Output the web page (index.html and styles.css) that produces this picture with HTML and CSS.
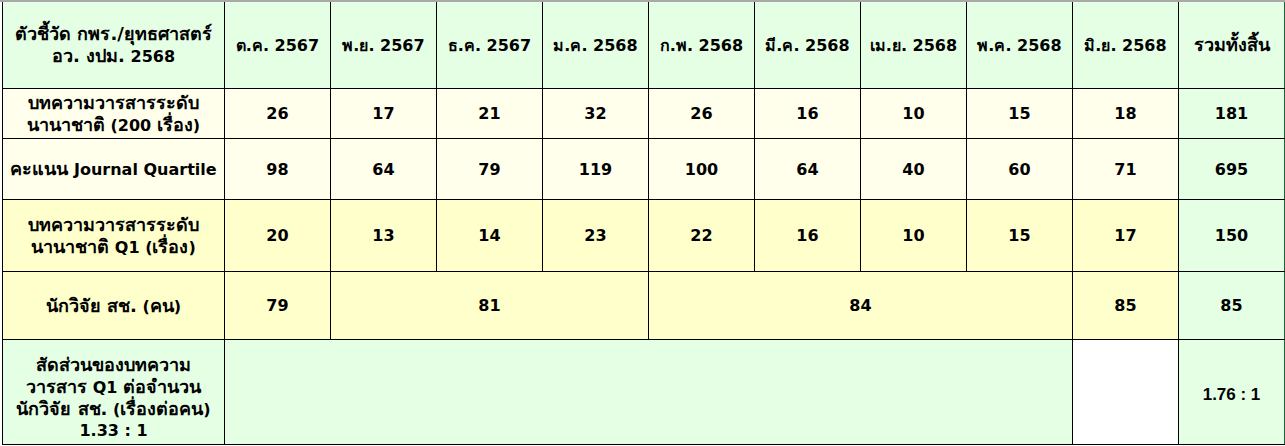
FILE: index.html
```html
<!DOCTYPE html>
<html lang="th">
<head>
<meta charset="utf-8">
<title>ตัวชี้วัด</title>
<link rel="stylesheet" href="styles.css">
</head>
<body>
<div class="frame">
<table class="kpi">
  <colgroup>
    <col class="c-label">
    <col class="c-m"><col class="c-m"><col class="c-m"><col class="c-m"><col class="c-m">
    <col class="c-m"><col class="c-m"><col class="c-m"><col class="c-m"><col class="c-m">
  </colgroup>
  <tr class="r-head">
    <th class="label"><span class="th">ตัวชี้วัด กพร./ยุทธศาสตร์</span><br><span class="th">อว. งปม.</span> 2568</th>
    <th>ต.ค. 2567</th>
    <th>พ.ย. 2567</th>
    <th>ธ.ค. 2567</th>
    <th>ม.ค. 2568</th>
    <th>ก.พ. 2568</th>
    <th>มี.ค. 2568</th>
    <th>เม.ย. 2568</th>
    <th>พ.ค. 2568</th>
    <th>มิ.ย. 2568</th>
    <th><span class="th">รวมทั้งสิ้น</span></th>
  </tr>
  <tr class="r1 cream">
    <td class="label"><span class="th">บทความวารสารระดับ</span><br><span class="th">นานาชาติ</span> (200 <span class="th">เรื่อง</span>)</td>
    <td>26</td><td>17</td><td>21</td><td>32</td><td>26</td><td>16</td><td>10</td><td>15</td><td>18</td>
    <td class="green">181</td>
  </tr>
  <tr class="r2 cream">
    <td class="label"><span class="th">คะแนน</span> Journal Quartile</td>
    <td>98</td><td>64</td><td>79</td><td>119</td><td>100</td><td>64</td><td>40</td><td>60</td><td>71</td>
    <td class="green">695</td>
  </tr>
  <tr class="r3 yellow">
    <td class="label"><span class="th">บทความวารสารระดับ</span><br><span class="th">นานาชาติ</span> Q1 (<span class="th">เรื่อง</span>)</td>
    <td>20</td><td>13</td><td>14</td><td>23</td><td>22</td><td>16</td><td>10</td><td>15</td><td>17</td>
    <td class="green">150</td>
  </tr>
  <tr class="r4 yellow">
    <td class="label"><span class="th">นักวิจัย สช.</span> (<span class="th">คน</span>)</td>
    <td>79</td>
    <td colspan="3">81</td>
    <td colspan="4">84</td>
    <td>85</td>
    <td class="green">85</td>
  </tr>
  <tr class="r5 green">
    <td class="label ratio-label"><span class="th">สัดส่วนของบทความ</span><br><span class="th">วารสาร</span> Q1 <span class="th">ต่อจำนวน</span><br><span class="th">นักวิจัย สช.</span> (<span class="th">เรื่องต่อคน</span>)<br>1.33 : 1</td>
    <td colspan="8"></td>
    <td class="white"></td>
    <td class="ratio">1.76 : 1</td>
  </tr>
</table>
</div>
</body>
</html>
```

FILE: styles.css
```css
html, body {
  margin: 0;
  padding: 0;
  background: #ffffff;
}
.frame {
  width: 1285px;
  height: 446px;
  overflow: hidden;
  border-top: 2px solid #a8a8a8;
  box-sizing: border-box;
  padding-left: 2px;
}
.kpi {
  border-collapse: collapse;
  table-layout: fixed;
  width: 1282px;
  margin-top: -1px;
  font-family: Tahoma, "DejaVu Sans", "Noto Sans", sans-serif;
  font-weight: bold;
  font-size: 16px;
  color: #000;
}
.c-label { width: 222px; }
.c-m { width: 106px; }
.kpi th, .kpi td {
  border: 1px solid #000;
  text-align: center;
  vertical-align: middle;
  padding: 0 1px;
  line-height: 21px;
  font-weight: bold;
  white-space: nowrap;
}
.th { font-size: 18px; line-height: 21px; }
.r-head th { background: #e5ffe5; height: 86px; }
.r1 td { height: 49px; }
.r2 td { height: 60px; }
.r3 td { height: 71px; }
.r4 td { height: 67px; }
.r5 td { height: 104px; }
.kpi td.ratio-label { padding-top: 10px; height: 94px; }
.cream td { background: #ffffeb; }
.yellow td { background: #ffffcc; }
.green td, .kpi td.green { background: #e5ffe5; }
.kpi td.white { background: #ffffff; }
.kpi td.ratio {
  font-family: "Liberation Sans", Arial, sans-serif;
  font-size: 17px;
  padding-top: 4px;
  height: 100px;
}
.kpi tr > :last-child { border-right-color: #1f5f3a; }
```
